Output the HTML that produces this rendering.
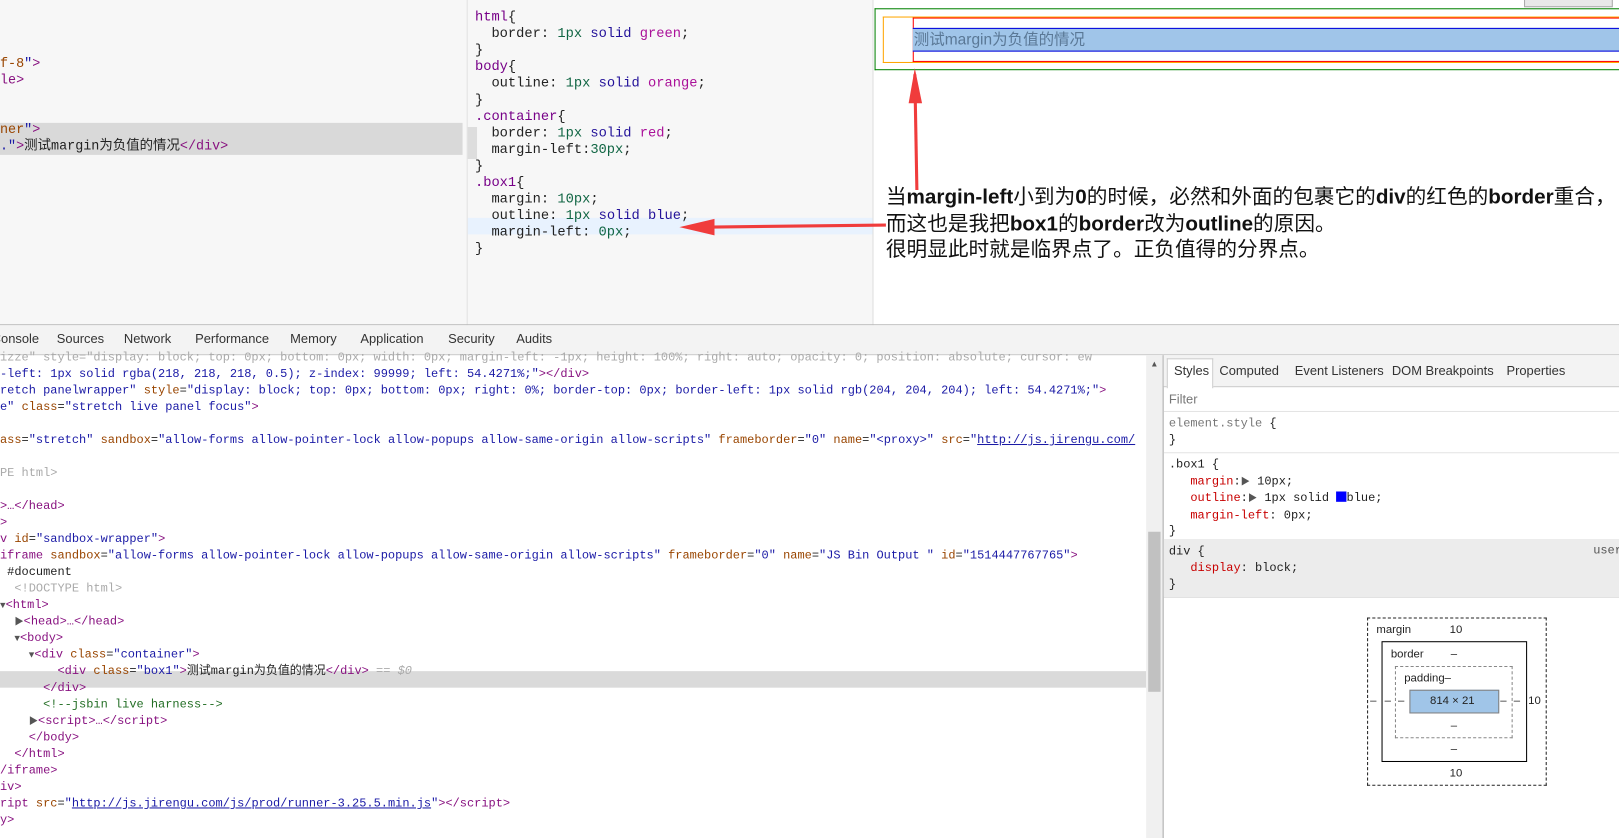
<!DOCTYPE html>
<html><head><meta charset="utf-8">
<style>
html,body{margin:0;padding:0;width:1619px;height:838px;overflow:hidden;background:#fff;}
#w{position:absolute;left:0;top:0;width:1568px;height:812px;transform:scale(1.03253);transform-origin:0 0;font-family:"Liberation Sans","Noto Sans CJK SC",sans-serif;}
.a{position:absolute;}
.mono{font-family:"Liberation Mono","Noto Sans CJK SC",monospace;white-space:pre;}
.el{font-size:11.6px;line-height:16px;left:0;color:#222;}
.t{color:#881280}.n{color:#994500}.v{color:#1a1aa6}.g{color:#aaa}.c{color:#236e25}.u{color:#1a1aa6;text-decoration:underline}
.css{font-size:13.3px;line-height:16px;color:#222;}
.k{color:#770088}.num{color:#116644}.s{color:#221199}.col{color:#aa1199}
.p{color:#c80000}
.tr{color:#555;font-size:9px}
</style></head><body><div id="w">
<div class="a" style="left:0;top:0;width:452px;height:315px;background:#f7f7f7"></div>
<div class="a" style="left:452px;top:0;width:1px;height:315px;background:#ddd"></div>
<div class="a" style="left:453px;top:0;width:392px;height:315px;background:#f7f7f7"></div>
<div class="a" style="left:845px;top:0;width:1px;height:315px;background:#ddd"></div>
<div class="a" style="left:0;top:119px;width:448px;height:31px;background:#d9d9d9"></div>
<div class="a mono" style="left:0;top:54px;font-size:13px;line-height:16px;color:#222"><span class="n">f-8</span><span class="v">"</span><span class="t">&gt;</span>
<span class="t">le&gt;</span></div>
<div class="a mono" style="left:0;top:118px;font-size:13px;line-height:16px;color:#222"><span class="n">ner</span><span class="v">"</span><span class="t">&gt;</span>
<span class="v">."</span><span class="t">&gt;</span>测试margin为负值的情况<span class="t">&lt;/div&gt;</span></div>

<div class="a" style="left:453px;top:123px;width:9px;height:31px;background:#ddd"></div>
<div class="a" style="left:453px;top:211px;width:392px;height:16px;background:#e8f2fe"></div>
<div class="a mono css" style="left:460px;top:9px"><span class="k">html</span>{
  border: <span class="num">1px</span> <span class="s">solid</span> <span class="col">green</span>;
}
<span class="k">body</span>{
  outline: <span class="num">1px</span> <span class="s">solid</span> <span class="col">orange</span>;
}
<span class="k">.container</span>{
  border: <span class="num">1px</span> <span class="s">solid</span> <span class="col">red</span>;
  margin-left:<span class="num">30px</span>;
}
<span class="k">.box1</span>{
  margin: <span class="num">10px</span>;
  outline: <span class="num">1px</span> <span class="s">solid</span> <span class="s">blue</span>;
  margin-left: <span class="num">0px</span>;
}</div>

<div class="a" style="left:1476px;top:-2px;width:84px;height:7px;border:1px solid #aaa;background:#e8e8e8"></div>
<div class="a" style="left:847px;top:8px;width:730px;height:58px;border:1px solid green;border-right:none"></div>
<div class="a" style="left:855px;top:16px;width:720px;height:43px;border:1px solid orange;border-right:none"></div>
<div class="a" style="left:884px;top:17px;width:700px;height:41px;border:1px solid red;border-right:none"></div>
<div class="a" style="left:884px;top:27px;width:700px;height:21px;background:#a0c5e9;border-top:1px solid #0000dd;border-bottom:1px solid #0000dd"></div>
<div class="a" style="left:885px;top:29px;font-size:15px;color:#5a7896;line-height:20px;white-space:nowrap">测试margin为负值的情况</div>

<svg class="a" style="left:640px;top:60px" width="260" height="180">
<path d="M248 124 L246 12" stroke="#f03c3c" stroke-width="3" fill="none"/>
<path d="M240 40 L246 6 L253 40 Z" fill="#f03c3c"/>
<path d="M218 158 L40 160" stroke="#f03c3c" stroke-width="3" fill="none"/>
<path d="M18 160 L52 152 L52 168 Z" fill="#f03c3c"/>
</svg>
<div class="a" style="left:858px;top:179px;font-size:20px;line-height:25.5px;color:#111;white-space:nowrap">当<b style="font-weight:600">margin-left</b>小到为<b style="font-weight:600">0</b>的时候，必然和外面的包裹它的<b style="font-weight:600">div</b>的红色的<b style="font-weight:600">border</b>重合，<br>而这也是我把<b style="font-weight:600">box1</b>的<b style="font-weight:600">border</b>改为<b style="font-weight:600">outline</b>的原因。<br>很明显此时就是临界点了。正负值得的分界点。</div>

<div class="a" style="left:0;top:314px;width:1568px;height:1px;background:#bbb"></div>
<div class="a" style="left:0;top:315px;width:1568px;height:28px;background:#f3f3f3;border-bottom:1px solid #ccc"></div>
<div class="a" style="left:0;top:321px;font-size:12.5px;color:#333;white-space:nowrap">
<span style="position:absolute;left:-8px">Console</span><span style="position:absolute;left:55px">Sources</span><span style="position:absolute;left:120px">Network</span><span style="position:absolute;left:189px">Performance</span><span style="position:absolute;left:281px">Memory</span><span style="position:absolute;left:349px">Application</span><span style="position:absolute;left:434px">Security</span><span style="position:absolute;left:500px">Audits</span></div>

<div class="a" style="left:0;top:650px;width:1110px;height:16px;background:#dadada"></div>
<div class="a mono el" style="top:339px"><span class="g">izze" style="display: block; top: 0px; bottom: 0px; width: 0px; margin-left: -1px; height: 100%; right: auto; opacity: 0; position: absolute; cursor: ew</span>
<span class="v">-left: 1px solid rgba(218, 218, 218, 0.5); z-index: 99999; left: 54.4271%;</span><span class="v">"</span><span class="t">&gt;&lt;/div&gt;</span>
<span class="v">retch panelwrapper"</span> <span class="n">style</span>=<span class="v">"display: block; top: 0px; bottom: 0px; right: 0%; border-top: 0px; border-left: 1px solid rgb(204, 204, 204); left: 54.4271%;"</span><span class="t">&gt;</span>
<span class="v">e"</span> <span class="n">class</span>=<span class="v">"stretch live panel focus"</span><span class="t">&gt;</span>

<span class="n">ass</span>=<span class="v">"stretch"</span> <span class="n">sandbox</span>=<span class="v">"allow-forms allow-pointer-lock allow-popups allow-same-origin allow-scripts"</span> <span class="n">frameborder</span>=<span class="v">"0"</span> <span class="n">name</span>=<span class="v">"&lt;proxy&gt;"</span> <span class="n">src</span>=<span class="v">"</span><span class="u">http://js.jirengu.com/</span>

<span class="g">PE html&gt;</span>

<span class="t">&gt;…&lt;/head&gt;</span>
<span class="t">&gt;</span>
<span class="t">v </span><span class="n">id</span>=<span class="v">"sandbox-wrapper"</span><span class="t">&gt;</span>
<span class="t">iframe </span><span class="n">sandbox</span>=<span class="v">"allow-forms allow-pointer-lock allow-popups allow-same-origin allow-scripts"</span> <span class="n">frameborder</span>=<span class="v">"0"</span> <span class="n">name</span>=<span class="v">"JS Bin Output "</span> <span class="n">id</span>=<span class="v">"1514447767765"</span><span class="t">&gt;</span>
 #document
  <span class="g">&lt;!DOCTYPE html&gt;</span>
<span class="tr">▼</span><span class="t">&lt;html&gt;</span>
  <span class="tr">▶</span><span class="t">&lt;head&gt;…&lt;/head&gt;</span>
  <span class="tr">▼</span><span class="t">&lt;body&gt;</span>
    <span class="tr">▼</span><span class="t">&lt;div </span><span class="n">class</span>=<span class="v">"container"</span><span class="t">&gt;</span>
        <span class="t">&lt;div </span><span class="n">class</span>=<span class="v">"box1"</span><span class="t">&gt;</span>测试margin为负值的情况<span class="t">&lt;/div&gt;</span> <span class="g">== <i>$0</i></span>
      <span class="t">&lt;/div&gt;</span>
      <span class="c">&lt;!--jsbin live harness--&gt;</span>
    <span class="tr">▶</span><span class="t">&lt;script&gt;…&lt;/script&gt;</span>
    <span class="t">&lt;/body&gt;</span>
  <span class="t">&lt;/html&gt;</span>
<span class="t">/iframe&gt;</span>
<span class="t">iv&gt;</span>
<span class="t">ript </span><span class="n">src</span>=<span class="v">"</span><span class="u">http://js.jirengu.com/js/prod/runner-3.25.5.min.js</span><span class="v">"</span><span class="t">&gt;&lt;/script&gt;</span>
<span class="t">y&gt;</span></div>

<div class="a" style="left:1110px;top:344px;width:16px;height:468px;background:#f0f0f0"></div>
<div class="a" style="left:1112px;top:515px;width:12px;height:155px;background:#c1c1c1"></div>
<div class="a" style="left:1114px;top:348px;font-size:8px;color:#555">▲</div>
<div class="a" style="left:1126px;top:344px;width:1px;height:468px;background:#aaa"></div>

<div class="a" style="left:1127px;top:344px;width:441px;height:30px;background:#f3f3f3;border-bottom:1px solid #ccc"></div>
<div class="a" style="left:1130px;top:347px;width:43px;height:28px;background:#fff;border:1px solid #ccc;border-bottom:none"></div>
<div class="a" style="left:1127px;top:352px;font-size:12.5px;color:#333;white-space:nowrap">
<span style="position:absolute;left:10px">Styles</span><span style="position:absolute;left:54px">Computed</span><span style="position:absolute;left:127px">Event Listeners</span><span style="position:absolute;left:221px">DOM Breakpoints</span><span style="position:absolute;left:332px">Properties</span></div>
<div class="a" style="left:1132px;top:380px;font-size:12.5px;color:#777">Filter</div>
<div class="a" style="left:1127px;top:398px;width:441px;height:1px;background:#e4e4e4"></div>
<div class="a mono" style="left:1132px;top:403px;font-size:11.6px;line-height:16px;color:#222"><span style="color:#777">element.style</span> {
}</div>
<div class="a" style="left:1127px;top:438px;width:441px;height:1px;background:#e4e4e4"></div>
<div class="a mono" style="left:1132px;top:443px;font-size:11.6px;line-height:15.5px;color:#222">.box1 {
   <span class="p">margin</span>:<span style="font-size:9px;color:#555">▶</span> 10px;
   <span class="p">outline</span>:<span style="font-size:9px;color:#555">▶</span> 1px solid <span style="display:inline-block;width:10px;height:10px;background:#00f;vertical-align:-1px"></span>blue;
   <span class="p">margin-left</span>: 0px;
}</div>
<div class="a" style="left:1127px;top:522px;width:441px;height:56px;background:#ececec"></div>
<div class="a mono" style="left:1132px;top:527px;font-size:11.6px;line-height:16px;color:#222">div {
   <span class="p">display</span>: block;
}</div>
<div class="a" style="left:1543px;top:527px;font-size:11.6px;color:#555;font-family:'Liberation Mono',monospace">user</div>
<div class="a" style="left:1127px;top:578px;width:441px;height:1px;background:#ddd"></div>

<div class="a" style="left:1324px;top:598px;width:172px;height:161px;border:1px dashed #222"></div>
<div class="a" style="left:1338px;top:621px;width:139px;height:115px;border:1px solid #000"></div>
<div class="a" style="left:1351px;top:645px;width:112px;height:68px;border:1px dashed #888"></div>
<div class="a" style="left:1365px;top:668px;width:85px;height:21px;background:#a0c5e8;border:1px solid #808080"></div>
<div class="a" style="font-size:11px;color:#222;left:0;top:0;width:1568px">
<span class="a" style="left:1333px;top:604px">margin</span><span class="a" style="left:1404px;top:604px">10</span>
<span class="a" style="left:1347px;top:628px">border</span><span class="a" style="left:1405px;top:628px">–</span>
<span class="a" style="left:1360px;top:651px">padding–</span>
<span class="a" style="left:1385px;top:673px">814 × 21</span>
<span class="a" style="left:1327px;top:673px">–</span><span class="a" style="left:1341px;top:673px">–</span><span class="a" style="left:1354px;top:673px">–</span>
<span class="a" style="left:1453px;top:673px">–</span><span class="a" style="left:1466px;top:673px">–</span><span class="a" style="left:1480px;top:673px">10</span>
<span class="a" style="left:1405px;top:697px">–</span><span class="a" style="left:1405px;top:720px">–</span><span class="a" style="left:1404px;top:743px">10</span>
</div>
</div></body></html>
